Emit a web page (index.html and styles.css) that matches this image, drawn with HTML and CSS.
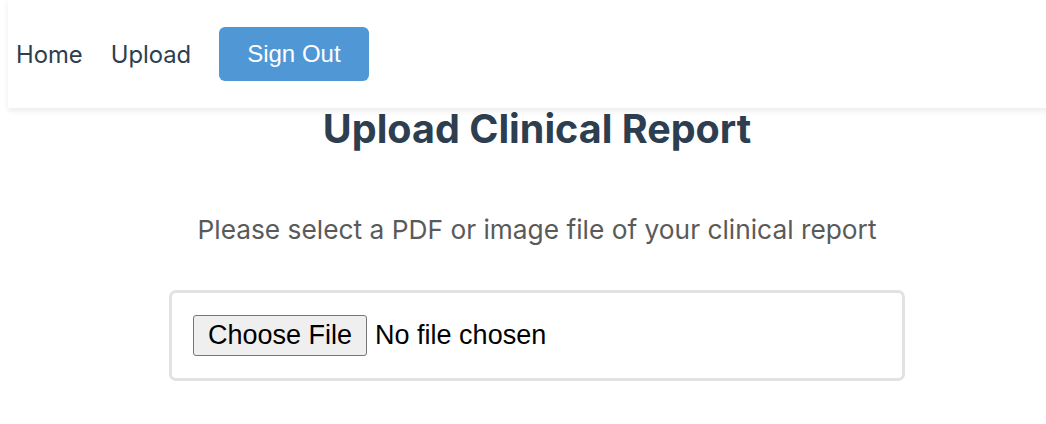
FILE: index.html
```html
<!DOCTYPE html>
<html lang="en">
<head>
<meta charset="utf-8">
<title>Upload Clinical Report</title>
<link rel="stylesheet" href="styles.css">
</head>
<body>
  <nav class="navbar">
    <a class="nav-link" href="#">Home</a>
    <a class="nav-link" href="#">Upload</a>
    <button class="signout" type="button">Sign Out</button>
  </nav>
  <main class="upload">
    <h1 class="title">Upload Clinical Report</h1>
    <p class="hint">Please select a PDF or image file of your clinical report</p>
    <div class="file-box">
      <input class="file-input" type="file" accept=".pdf,image/*">
    </div>
  </main>
</body>
</html>
```
FILE: styles.css
```css
html, body {
  margin: 0;
  background: #ffffff;
}
body {
  padding: 0 0 0 8px;
  font-family: Inter, "Noto Sans", sans-serif;
  overflow: hidden;
}
.navbar {
  height: 108px;
  display: flex;
  align-items: center;
  padding-left: 8px;
  gap: 28px;
  box-shadow: 0 3px 6px rgba(0, 0, 0, 0.08);
  position: relative;
  margin-right: -8px;
}
.nav-link {
  font-size: 23.8px;
  color: #2d3e50;
  text-decoration: none;
}
.signout {
  height: 54px;
  padding: 0 28px;
  background: #5097d6;
  color: #ffffff;
  border: none;
  border-radius: 6px;
  font-family: "Liberation Sans", Arial, sans-serif;
  font-size: 24px;
}
.upload {
  padding-left: 20px;
  display: flex;
  flex-direction: column;
  align-items: center;
}
.title {
  margin: -2px 0 0;
  font-size: 39.5px;
  line-height: 1.2;
  font-weight: 700;
  color: #2d3e50;
}
.hint {
  margin: 61px 0 0;
  font-size: 26.3px;
  color: #5a5a5a;
}
.file-box {
  margin-top: 45px;
  width: 736px;
  box-sizing: border-box;
  border: 3px solid #e2e2e2;
  border-radius: 7px;
  padding: 22px 21px 22px 21px;
}
.file-input {
  font-family: "Liberation Sans", Arial, sans-serif;
  font-size: 27px;
  color: #000;
}
.file-input::file-selector-button {
  font-family: "Liberation Sans", Arial, sans-serif;
  font-size: 27px;
  height: 41px;
  padding: 0 14px;
  margin-right: 8px;
  background: #efefef;
  border: 1px solid #767676;
  border-radius: 3px;
  color: #000;
}
```
